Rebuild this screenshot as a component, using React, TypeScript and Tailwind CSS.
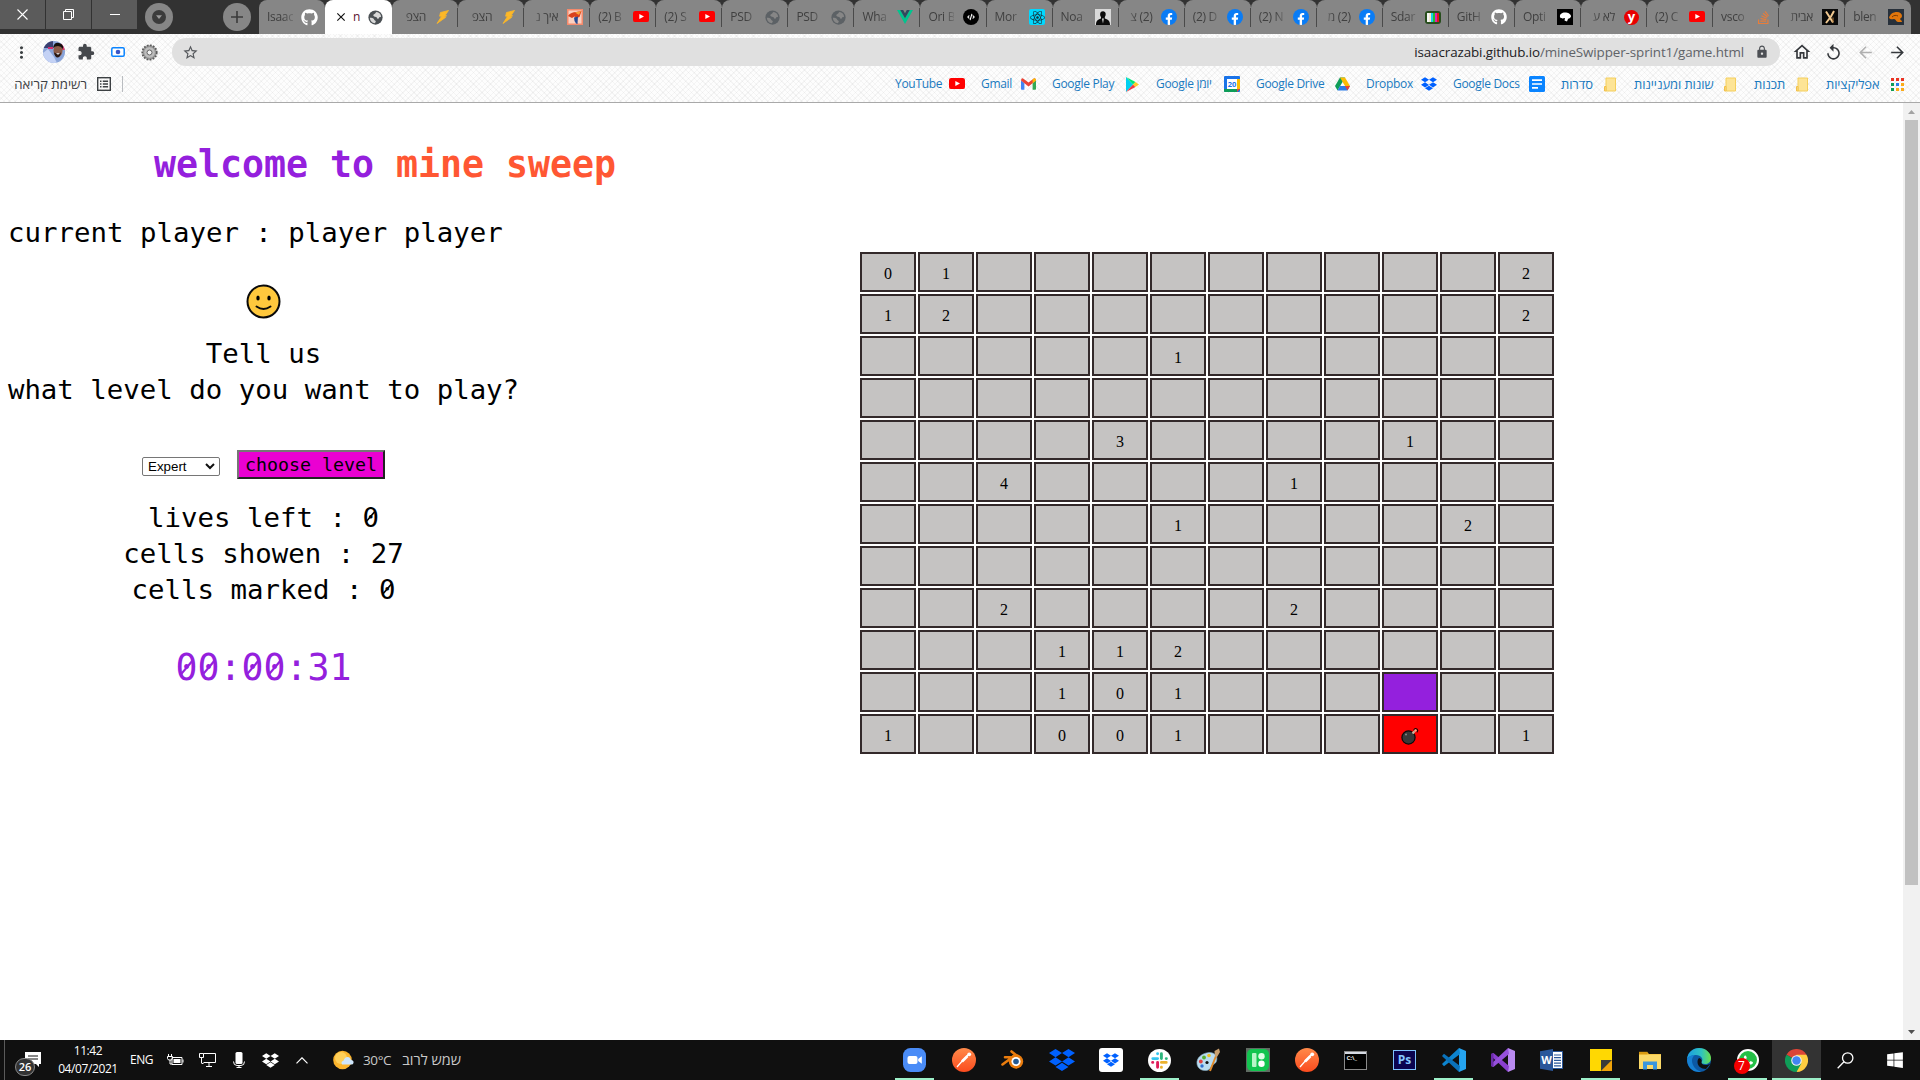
import React from "react";
import { FaGithub, FaReact, FaFacebookF, FaStackOverflow, FaDropbox, FaWindows, FaWhatsapp, FaCode } from "react-icons/fa";
import { MdExtension, MdStarBorder, MdLock, MdArrowForward, MdArrowBack, MdReplay, MdOutlineHome, MdMoreVert, MdClose } from "react-icons/md";

const Yt = ({ w = 16 }: { w?: number }) => (
  <svg width={w} height={w * 0.7} viewBox="0 0 16 11"><rect width="16" height="11" rx="2.2" fill="#f00" /><path d="M6.3 3v5L11 5.5z" fill="#fff" /></svg>
);
const Fb = () => (
  <span className="flex h-4 w-4 items-end justify-center overflow-hidden rounded-full bg-[#0a7cf5] text-white"><FaFacebookF size={12} /></span>
);
const Globe = ({ c, land }: { c: string; land: string }) => (
  <svg width="15" height="15" viewBox="0 0 16 16">
    <circle cx="8" cy="8" r="7.6" fill={c} />
    <path d="M9.5 2.2c-1.800.3-1.200 1.600-2.600 2S5 6 6.600 7c1.200.7 2.800.1 3 1.600.1 1.400 2 .8 2.400-.5.2-.8 1.300-.6 1.900-.4.2-2.700-1.600-5-4.400-5.500z" fill={land} />
    <path d="M2 8.300c1.500 0 4 .3 4.500 1.800.4 1.200 2 .9 1.800 2.200-.1.900-.8 1-.8 1.900C4.300 13.900 2 11.400 2 8.300z" fill={land} />
  </svg>
);
const Vue = () => (
  <svg width="16" height="14" viewBox="0 0 16 14"><path d="M0 0h3.200L8 8.300 12.800 0H16L8 14z" fill="#00c58e" /><path d="M3.200 0h3L8 3.200 9.800 0h3L8 8.300z" fill="#2f495e" /></svg>
);
const Bolt = () => (
  <svg width="14" height="14" viewBox="0 0 14 14"><path d="M12.500.5 4.500 2.500 3.600 6.200l2 .1L1 13.500l8.700-6.200-2.100-.3 3-1.200-1.400-.5z" fill="#fdb827" stroke="#fdb827" strokeWidth=".8" /></svg>
);
const Fox = () => (
  <svg width="16" height="16" viewBox="0 0 16 16"><rect width="16" height="16" fill="#f58a6c" /><rect x="1.500" y="1.500" width="13" height="13" fill="#fbd0c0" /><path d="M1 7c2-3 5-4 8-4l5.500-1-2 6-3 1-2-1.500L5 9z" fill="#d9421c" /><path d="M8 3.500l6-1.500-2 4z" fill="#f9a13a" /><path d="M7 8.500l4-1-.5 7.500-1.500-.5L7.500 12z" fill="#274a92" /></svg>
);
const Suit = () => (
  <svg width="16" height="16" viewBox="0 0 16 16"><rect width="16" height="16" fill="#d9d9d9" /><path d="M1 16c0-4 1.500-5.500 5-6.500V8C5.200 7 5 6 5.200 4.500 5.500 3 6.500 2.200 8 2.200s2.600 1 2.700 2.500C10.800 6 10.500 7 9.800 8v1.500C13.500 10.500 15 12 15 16z" fill="#0b0b0b" /><path d="M7 9.500l1 5 .8-5z" fill="#eee" /></svg>
);
const Tv = () => (
  <svg width="16" height="16" viewBox="0 0 16 16"><rect y="2" width="16" height="13" rx="3" fill="#274d1c" /><rect x="2" y="4" width="2" height="9" fill="#f5f5f5" /><rect x="4" y="4" width="2" height="9" fill="#f0e8d0" /><rect x="6" y="4" width="2" height="9" fill="#18d0e8" /><rect x="8" y="4" width="2" height="9" fill="#20c030" /><rect x="10" y="4" width="2" height="9" fill="#e020b0" /><rect x="12" y="4" width="2" height="9" fill="#e01818" /></svg>
);
const Blob = () => (
  <svg width="16" height="16" viewBox="0 0 16 16"><rect width="16" height="16" fill="#000" /><path d="M3 8c-.5-3 2-4.500 5-4.500 3 0 6 1.500 6 4-.6 2-2 1.500-3 2.500l-1 2.500-2.500-1 .5-2.500C6 9.500 4 10 3 8z" fill="#fff" /></svg>
);
const XIcon = () => (
  <svg width="16" height="16" viewBox="0 0 16 16"><rect width="16" height="16" fill="#0a0a0a" /><path d="M4 2.500l7 11M12 2l-3 5.500L4 14" stroke="#f0c890" strokeWidth="2" fill="none" /><path d="M11 8.500v5" stroke="#b07838" /></svg>
);
const Fish = () => (
  <svg width="16" height="16" viewBox="0 0 16 16"><rect width="16" height="16" fill="#27303a" /><path d="M1 9c1-4 4-6 8-6 3 0 5 2 5 4s-2 2-2 3 2 1 2 3h-4c-2 0-2-3-4-3s-3 1-5-1z" fill="#e0760c" /><path d="M4 8c2-2 4-2 6-1" stroke="#7a3a05" fill="none" /></svg>
);

type Tab = { t: string; icon: React.ReactNode; rtl?: boolean };
const tabs: Tab[] = [
  { t: "הצפ", icon: <Bolt />, rtl: true },
  { t: "הצפ", icon: <Bolt />, rtl: true },
  { t: "איך נ", icon: <Fox />, rtl: true },
  { t: "(2) B", icon: <Yt /> },
  { t: "(2) S", icon: <Yt /> },
  { t: "PSD", icon: <Globe c="#5c6165" land="#868686" /> },
  { t: "PSD", icon: <Globe c="#5c6165" land="#868686" /> },
  { t: "Wha", icon: <Vue /> },
  { t: "Ori B", icon: <span className="flex h-4 w-4 items-center justify-center rounded-full bg-black text-white"><FaCode size={8} /></span> },
  { t: "Mor", icon: <span className="flex h-4 w-4 items-center justify-center rounded-[2px] bg-[#00d8ff] text-[#15303a]"><FaReact size={15} /></span> },
  { t: "Noa", icon: <Suit /> },
  { t: "(2) צ", icon: <Fb />, rtl: true },
  { t: "(2) D", icon: <Fb /> },
  { t: "(2) N", icon: <Fb /> },
  { t: "(2) מ", icon: <Fb />, rtl: true },
  { t: "Sdar", icon: <Tv /> },
  { t: "GitH", icon: <FaGithub size={16} color="#fff" /> },
  { t: "Opti", icon: <Blob /> },
  { t: "לא ע", icon: <span className="flex h-[15px] w-[15px] items-center justify-center rounded-full bg-[#e80000] pb-[2px] text-[13px] font-bold leading-none text-white">y</span>, rtl: true },
  { t: "(2) C", icon: <Yt /> },
  { t: "vsco", icon: <FaStackOverflow size={15} color="#e87d3a" /> },
  { t: "אבית", icon: <XIcon />, rtl: true },
  { t: "blen", icon: <Fish /> },
];

function TabItem({ t, icon, rtl, last }: Tab & { last?: boolean }) {
  return (
    <div className="relative flex h-[34px] min-w-0 flex-1 items-center rounded-t-[8px] bg-[#868686] pl-2">
      <div
        dir={rtl ? "rtl" : "ltr"}
        className={
          rtl
            ? "w-[26px] whitespace-nowrap text-[12px] leading-[18px] tracking-[-0.3px] text-[#404040] [mask-image:linear-gradient(to_left,#000_60%,#0004)]"
            : "w-[26px] whitespace-nowrap text-[12px] leading-[18px] tracking-[-0.3px] text-[#404040] [mask-image:linear-gradient(to_right,#000_60%,#0004)]"
        }
      >
        {t}
      </div>
      <div className="ml-2 flex w-[17px] justify-center">{icon}</div>
      {!last && <div className="absolute right-0 top-2 h-[19px] w-px bg-[#4a4a4a]" />}
    </div>
  );
}

const Folder = () => (
  <svg width="14" height="15" viewBox="0 0 14 15"><path d="M3 1h9.500v13H3z" fill="#fde496" stroke="#f5cf5c" /><path d="M1.500 9.500H3V14H1.500z" fill="#fde496" stroke="#f2c14a" /></svg>
);
const GmailIcon = () => (
  <svg width="15" height="12" viewBox="0 0 15 12"><path d="M0 2.500V11q0 .8.8.8h2.600V5z" fill="#4285f4" /><path d="M15 2.500V11q0 .8-.8.8h-2.600V5z" fill="#34a853" /><path d="M0 2.500Q0 .2 1.800.2L7.500 4.600 13.200.2Q15 .2 15 2.500L7.500 8.400z" fill="#ea4335" /><path d="M11.600 1.400 13.200.2Q15 .2 15 2.500l-3.400 2.800z" fill="#fbbc04" /></svg>
);
const PlayIcon = () => (
  <svg width="14" height="15" viewBox="0 0 14 15"><path d="M1 0v15l7-7.500z" fill="#00d0f0" /><path d="M1 0l9.500 5L8 7.500z" fill="#00e676" /><path d="M1 15l9.500-5L8 7.500z" fill="#f03845" /><path d="M10.500 5 14 7.500 10.500 10 8 7.500z" fill="#ffca28" /></svg>
);
const CalIcon = () => (
  <svg width="16" height="16" viewBox="0 0 16 16"><rect width="16" height="16" rx="1" fill="#1a73e8" /><path d="M13 3h3v10h-3z" fill="#fbbc04" /><path d="M0 13h13v3H1q-1 0-1-1z" fill="#0f9d58" /><path d="M13 13h3l-3 3z" fill="#ea4335" /><rect x="3" y="3" width="10" height="10" fill="#fff" /><text x="8" y="10.800" fontSize="7.500" fontWeight="bold" textAnchor="middle" fill="#1a73e8">20</text></svg>
);
const DriveIcon = () => (
  <svg width="15" height="14" viewBox="0 0 15 14"><path d="M5 .5h5L7.500 5 2.500 13.500 0 9z" fill="#0f9d58" /><path d="M5 .5h5L15 9h-5z" fill="#fbbc04" /><path d="M5 9h10l-2.500 4.500h-10z" fill="#2b7de9" /><path d="M12.500 13.500 10 9h5z" fill="#ea4335" /></svg>
);
const DocsIcon = () => (
  <svg width="16" height="16" viewBox="0 0 16 16"><rect width="16" height="16" rx="1.500" fill="#0a84ff" /><path d="M3 4.200h10M3 8h10M3 11.800h6" stroke="#fff" strokeWidth="1.700" /></svg>
);
const AppsIcon = () => {
  const c = ["#ea3323", "#ea3323", "#ea3323", "#0f9d58", "#2b7de9", "#fbab18", "#0f9d58", "#fbab18", "#fbab18"];
  return (
    <div className="grid grid-cols-3 gap-[2px]">
      {c.map((x, i) => <div key={i} className="h-[3px] w-[3px]" style={{ background: x }} />)}
    </div>
  );
};

const bookmarks: { t: string; w: number; icon: React.ReactNode }[] = [
  { t: "YouTube", w: 70, icon: <Yt /> },
  { t: "Gmail", w: 55, icon: <GmailIcon /> },
  { t: "Google Play", w: 88, icon: <PlayIcon /> },
  { t: "Google יומן", w: 84, icon: <CalIcon /> },
  { t: "Google Drive", w: 94, icon: <DriveIcon /> },
  { t: "Dropbox", w: 71, icon: <FaDropbox size={16} color="#0061ff" /> },
  { t: "Google Docs", w: 92, icon: <DocsIcon /> },
  { t: "סדרות", w: 57, icon: <Folder /> },
  { t: "שונות ומעניינות", w: 104, icon: <Folder /> },
  { t: "תכנות", w: 56, icon: <Folder /> },
  { t: "אפליקציות", w: 79, icon: <AppsIcon /> },
];

const rows = [
  "01.........2",
  "12.........2",
  ".....1......",
  "............",
  "....3....1..",
  "..4....1....",
  ".....1....2.",
  "............",
  "..2....2....",
  "...112......",
  "...101...P..",
  "1..001...B.1",
];

const Bomb = () => (
  <svg width="18" height="18" viewBox="0 0 18 18"><circle cx="7.500" cy="10.500" r="6.600" fill="#383838" stroke="#0a0a0a" strokeWidth="1.200" /><path d="M11.500 6.500l2-2.200" stroke="#c9b8a0" strokeWidth="2.200" /><path d="M12.700 3.500q1-2.500 3-1.500 2 1.500 0 3.300" stroke="#140000" strokeWidth="1.200" fill="none" /><circle cx="14.500" cy="3.500" r="1.200" fill="#ffb090" /><circle cx="5" cy="7.500" r="1" fill="#8a8a8a" /></svg>
);

/* Zero with a diagonal stroke through the counter */
const Zero = () => (
  <span className="relative inline-block leading-none">
    0
    <svg className="absolute inset-0 h-full w-full" viewBox="0 0 60 100" preserveAspectRatio="none"><path d="M14 66L46 28" stroke="currentColor" strokeWidth="6" /></svg>
  </span>
);

const Postman = () => (
  <svg width="24" height="24" viewBox="0 0 24 24"><defs><linearGradient id="pm" x2="0" y2="1"><stop stopColor="#ff8a4a" /><stop offset="1" stopColor="#fb4b1e" /></linearGradient></defs><circle cx="12" cy="12" r="12" fill="url(#pm)" /><path d="M5 19l6.500-7.500M11 12.500l5-5.500" stroke="#fff" strokeWidth="1.200" /><path d="M10 13.500l5.500-5.500" stroke="#fff" strokeWidth="2.600" /><circle cx="17.200" cy="6.300" r="1.900" fill="#fff" /></svg>
);
const taskIcons: { icon: React.ReactNode; u?: boolean; active?: boolean }[] = [
  { u: true, icon: <svg width="23" height="24" viewBox="0 0 23 24"><rect width="23" height="24" rx="7.500" fill="#4a8cf7" /><rect x="4.500" y="8" width="10" height="8" rx="2" fill="#fff" /><path d="M15.200 11l3.600-2.700v7.400L15.200 13z" fill="#fff" /></svg> },
  { icon: <Postman /> },
  { icon: <svg width="24" height="20" viewBox="0 0 24 20"><path d="M1.500 14.500 14 5.200M4 7.300h10M10.500 1.500l9 7" stroke="#ea7c0d" strokeWidth="2.600" strokeLinecap="round" /><circle cx="15" cy="11.500" r="7.200" fill="#ea7c0d" /><circle cx="15" cy="11.500" r="4.600" fill="#fff" /><circle cx="15" cy="11.500" r="2.800" fill="#235a94" /></svg> },
  { icon: <FaDropbox size={26} color="#0061ff" /> },
  { icon: <span className="flex h-6 w-6 items-center justify-center rounded-[3px] bg-white"><FaDropbox size={16} color="#0061ff" /></span> },
  { u: true, icon: <svg width="23" height="23" viewBox="0 0 24 24"><circle cx="12" cy="12" r="12" fill="#fff" /><g strokeWidth="3" strokeLinecap="round"><path d="M10 4.800V5M5 10h5" stroke="#36c5f0" /><path d="M14 5v5M19 10h.2" stroke="#2eb67d" /><path d="M14 14h5M14 19v.2" stroke="#ecb22e" /><path d="M10 14v5M5 14h-.2" stroke="#e01e5a" /></g></svg> },
  { icon: <svg width="25" height="24" viewBox="0 0 25 24"><path d="M1 16C0 10 6 5 13 4.500c6-.3 9 4 7.500 8.500-1 3.500-4 3-5 5s-2 5-7 4.500S1.500 19 1 16z" fill="#b9dcf0" stroke="#7fa8c0" strokeWidth=".6" /><circle cx="8" cy="9.500" r="1.900" fill="#58b030" /><circle cx="13" cy="7.500" r="1.800" fill="#f0c020" /><circle cx="4.800" cy="13.500" r="1.900" fill="#e04040" /><circle cx="6" cy="18" r="1.700" fill="#3070d0" /><circle cx="11" cy="14.500" r="1.600" fill="#101010" /><path d="M14 23 20 8" stroke="#e08a2a" strokeWidth="2" /><path d="M19 8.500 18.500 3 23 .5 24 4l-3 5z" fill="#c9a070" /></svg> },
  { icon: <svg width="24" height="24" viewBox="0 0 24 24"><rect width="24" height="24" fill="#5f6b62" /><rect x="1" y="1" width="22" height="22" rx="5" fill="#12c44f" /><rect x="6" y="5" width="4.500" height="14" rx="1" fill="#b8f5c8" /><circle cx="15.500" cy="8.200" r="3.200" fill="#dfffe6" /><circle cx="15.500" cy="15.800" r="3.200" fill="#fff" /></svg> },
  { icon: <Postman /> },
  { icon: <svg width="23" height="19" viewBox="0 0 23 19"><rect x=".5" y=".5" width="22" height="18" fill="#000" stroke="#8a8a8a" /><rect x="1" y="1" width="21" height="2" fill="#d5d9e2" /><text x="2.500" y="9" fontSize="6" fontWeight="bold" fill="#eee">C:\_</text></svg> },
  { icon: <span className="flex h-5 w-[23px] items-center justify-center border border-[#7fc4ff] bg-[#0b0550] text-[12px] font-bold leading-none text-[#86c8ff]">Ps</span> },
  { u: true, icon: <svg width="24" height="24" viewBox="0 0 24 24"><path d="M17 0l7 3v18l-7 3z" fill="#25a4f0" /><path d="M17 0 1.500 14.500 0 16l2 2.200L18 6z" fill="#0d84cf" /><path d="M17 24 1.500 9.500 0 8l2-2.200L18 18z" fill="#0a72bb" /></svg> },
  { icon: <svg width="24" height="24" viewBox="0 0 24 24"><path d="M17 0l7 3v18l-7 3z" fill="#b98af0" /><path d="M0 6l2.500-1L18 18l-1 6L0 8z" fill="#8a3fd0" /><path d="M0 18l2.500 1L18 6l-1-6L0 16z" fill="#9650dc" /><path d="M0 6l2.500-1v14L0 18z" fill="#6a2ca8" /></svg> },
  { icon: <svg width="23" height="22" viewBox="0 0 23 22"><path d="M12 2.500h10.500v17H12z" fill="#fff" stroke="#2b579a" /><path d="M14 6h7M14 8.700h7M14 11.400h7M14 14.100h7M14 16.800h7" stroke="#2b579a" strokeWidth="1.200" /><path d="M0 2.300 13 0v22L0 19.700z" fill="#2b579a" /><text x="6.500" y="15" fontSize="11" fontWeight="bold" textAnchor="middle" fill="#fff">W</text></svg> },
  { u: true, icon: <svg width="22" height="22" viewBox="0 0 22 22"><path d="M0 0h22v11L11 22H0z" fill="#ffd802" /><path d="M11 11h11L11 22z" fill="#3a3a3a" /><path d="M22 11v11H11z" fill="#f0a30a" /></svg> },
  { icon: <svg width="22" height="19" viewBox="0 0 22 19"><path d="M0 1h8l2 2h12v15H0z" fill="#f0b429" /><rect y="3.500" width="22" height="14.500" fill="#fbd968" /><path d="M0 .8h8.500v2.500H0z" fill="#d99a10" /><path d="M4 18.500V10.500h14v8h-4V14H8v4.500z" fill="#3a96dd" /></svg> },
  { icon: <svg width="24" height="24" viewBox="0 0 24 24"><defs><linearGradient id="eg"><stop stopColor="#1b9de2" /><stop offset=".6" stopColor="#2fc3c0" /><stop offset="1" stopColor="#6be04a" /></linearGradient></defs><circle cx="12" cy="12" r="12" fill="#0c59a4" /><path d="M0 11C1 4 6 0 12 0c7 0 12 5 12 10 0 4-3 6-6 6-2.500 0-4-1-3.500-2C17 11 14 7 9 7c-4 0-8 2-9 4z" fill="url(#eg)" /><path d="M0 11c1-2 4-4 8-4-3 2-4 6-2 10 1.500 3.500 5 6 8 6.700C6 25 0 19 0 11z" fill="#1680d2" /><path d="M14.500 14c-.5 1 1 3 4 3 2 0 4-.6 5-1.500L19 21c-5 0-8.500-3-8.500-7 0-2 .8-3.500 1.700-4 2 .5 3 2.500 2.300 4z" fill="#101010" /></svg> },
  { u: true, icon: <span className="relative flex h-[22px] w-[22px] items-center justify-center rounded-full border-2 border-white bg-[#25c047] text-white"><svg width="14" height="14" viewBox="0 0 14 14"><path d="M4 2.500q-2 1.500-.5 4.500Q5.500 10.500 9 11.500q2 .3 3-1.500l-.3-1L9.500 8l-1 1.200Q6 8.200 5 6l.8-1L5 2.700z" fill="#fff" /></svg><span className="absolute -left-[5px] top-[7px] flex h-4 w-4 items-center justify-center rounded-full bg-[#f40000] text-[12px] leading-none">7</span></span> },
  { u: true, active: true, icon: <svg width="23" height="23" viewBox="0 0 24 24"><path d="M12 12 1.600 6A12 12 0 0 1 22.400 6z" fill="#db4437" /><path d="M12 12V6H22.400A12 12 0 0 1 12 24z" fill="#ffcd40" /><path d="M12 12L1.600 6A12 12 0 0 0 12 24l5-9z" fill="#0f9d58" /><circle cx="12" cy="12" r="5.500" fill="#f1f1f1" /><circle cx="12" cy="12" r="4.400" fill="#4285f4" /></svg> },
  { icon: <svg width="17" height="17" viewBox="0 0 17 17" fill="none" stroke="#fff" strokeWidth="1.300"><circle cx="10.700" cy="6" r="5.200" /><path d="M7 9.700.7 16.300" /></svg> },
  { icon: <FaWindows size={18} color="#fff" /> },
];

export default function App() {
  return (
    <div className="flex h-[1080px] w-[1920px] flex-col overflow-hidden bg-white font-['Open_Sans','Noto_Sans','Liberation_Sans',sans-serif] text-black">
      {/* Tab strip */}
      <div className="flex h-[34px] shrink-0 bg-[#323232]">
        <div className="flex h-[29px] w-[137px] gap-px text-white">
          <div className="flex w-[45px] items-center justify-center bg-[#5b5b5b]"><svg width="11" height="11" viewBox="0 0 11 11" stroke="#fff" strokeWidth="1.100"><path d="M.5.5l10 10M10.500.5l-10 10" /></svg></div>
          <div className="flex w-[45px] items-center justify-center bg-[#5b5b5b]"><svg width="11" height="11" viewBox="0 0 11 11" stroke="#fff" fill="none"><path d="M.5 2.500h8v8h-8zM2.500 2.500v-2h8v8h-2" /></svg></div>
          <div className="flex w-[45px] items-center justify-center bg-[#5b5b5b]"><div className="h-px w-[10px] bg-white" /></div>
        </div>
        <div className="ml-2 mt-[3px] flex h-7 w-7 items-center justify-center rounded-full bg-[#868686]">
          <svg width="14" height="14" viewBox="0 0 14 14"><circle cx="7" cy="7" r="7" fill="#3b3b3b" /><path d="M4 5.300h6L7 9z" fill="#9a9a9a" /></svg>
        </div>
        <div className="ml-[50px] mt-[3px] flex h-7 w-7 items-center justify-center rounded-full bg-[#868686]">
          <svg width="12" height="12" viewBox="0 0 12 12" stroke="#3b3b3b" strokeWidth="1.600"><path d="M6 0v12M0 6h12" /></svg>
        </div>
        <div className="ml-2 flex w-[1652px]">
          <TabItem t="Isaac" icon={<FaGithub size={17} color="#fff" />} last />
          <div className="flex h-[34px] min-w-0 flex-1 items-center rounded-t-[8px] bg-white pl-[9px]">
            <MdClose size={14} color="#111" />
            <div className="ml-[5px] w-[8px] text-[12px] leading-[18px] text-[#5a1030]">n</div>
            <div className="ml-[7px]"><Globe c="#4b5054" land="#d8d8d8" /></div>
          </div>
          {tabs.map((t, i) => <TabItem key={i} {...t} last={i === tabs.length - 1} />)}
        </div>
      </div>

      {/* Toolbar and bookmarks */}
      <div className="flex h-[69px] shrink-0 flex-col border-b border-[#a9a9a9] bg-[#fdfdfd] bg-[repeating-linear-gradient(45deg,#0000_0_3px,#00000009_3px_4px),repeating-linear-gradient(-45deg,#0000_0_3px,#00000009_3px_4px)]">
        <div className="flex h-9 items-center">
          <div className="ml-[11px] flex w-5 justify-center"><MdMoreVert size={19} color="#3c4043" /></div>
          <svg className="ml-3" width="22" height="22" viewBox="0 0 22 22"><defs><clipPath id="av"><circle cx="11" cy="11" r="11" /></clipPath></defs><g clipPath="url(#av)"><rect width="22" height="22" fill="#8aa4d8" /><path d="M0 0h10v7H0z" fill="#3a3f70" /><path d="M5 6h5v2H5z" fill="#d03070" /><path d="M18 0h4v9h-4z" fill="#d83a68" /><path d="M0 22V12l5-4 6 8 3 6z" fill="#c4d2f5" /><ellipse cx="15" cy="9.500" rx="4.500" ry="6.500" fill="#8a5c48" /><path d="M10 7q1-6 6-5 5 1 4 6-2-3-5-3t-5 2z" fill="#14100e" /><path d="M11 11.500q4 2 7 0-1 5-3.500 5t-3.500-5z" fill="#2a1812" /><path d="M13 12.300h4l-2 1.500z" fill="#fff" /></g></svg>
          <div className="ml-3 flex w-[18px] justify-center"><MdExtension size={18} color="#45484c" /></div>
          <svg className="ml-4" width="14" height="10" viewBox="0 0 14 10"><rect x=".8" y=".8" width="12.400" height="8.400" rx="1.200" fill="#fff" stroke="#0a84ff" strokeWidth="1.500" /><circle cx="7" cy="5" r="2.300" fill="#3a56c5" /></svg>
          <svg className="ml-[16px]" width="17" height="17" viewBox="0 0 17 17"><circle cx="8.500" cy="8.500" r="7.200" fill="#a4a4a4" stroke="#5b5b5b" strokeWidth="1.800" strokeDasharray="1.800 1.300" /><circle cx="8.500" cy="8.500" r="5.800" fill="#bdbdbd" stroke="#888" strokeWidth=".8" /><circle cx="8.500" cy="8.500" r="2.500" fill="#f2f2f2" stroke="#666" /></svg>
          <div className="ml-[14px] flex h-7 w-[1608px] items-center justify-between rounded-full bg-[#e0e0e0] pl-[10px] pr-[11px]">
            <MdStarBorder size={17} color="#55585c" />
            <div className="flex items-center">
              <span className="whitespace-nowrap text-[13.400px] leading-5 tracking-[-0.100px] text-[#5f6368]"><span className="text-[#202124]">isaacrazabi.github.io</span>/mineSwipper-sprint1/game.html</span>
              <MdLock className="ml-[11px]" size={14} color="#4c4f54" />
            </div>
          </div>
          <MdOutlineHome className="ml-3" size={20} color="#35383c" />
          <MdReplay className="ml-[12px]" size={19} color="#35383c" />
          <MdArrowBack className="ml-[13px]" size={19} color="#b0b0b0" />
          <MdArrowForward className="ml-[13px]" size={19} color="#35383c" />
        </div>
        <div className="-mt-[2px] flex h-8 items-center justify-between pl-[14px] pr-[15px] text-[12px] leading-[18px]">
          <div className="flex items-center">
            <span dir="rtl" className="w-[73px] whitespace-nowrap text-[13.200px] text-[#3c4043]">רשימת קריאה</span>
            <svg className="ml-[10px]" width="14" height="14" viewBox="0 0 14 14"><rect x=".7" y=".7" width="12.600" height="12.600" fill="none" stroke="#3c4043" strokeWidth="1.400" /><path d="M3 4.200h1.500M3 7h1.500M3 9.800h1.500M5.800 4.200H11M5.800 7H11M5.800 9.800H11" stroke="#3c4043" strokeWidth="1.400" /></svg>
            <div className="ml-[11px] h-4 w-px bg-[#b9bcc0]" />
          </div>
          <div className="flex gap-4 text-[#1a7abf]">
            {bookmarks.map((b, i) => (
              <div key={i} className="flex shrink-0 items-center justify-between" style={{ width: b.w }}>
                <span
                  className={
                    i > 6
                      ? "whitespace-nowrap text-[13px] tracking-[-0.100px]"
                      : "whitespace-nowrap tracking-[-0.300px]"
                  }
                >
                  {b.t}
                </span>
                <span className="flex w-4 shrink-0 justify-center">{b.icon}</span>
              </div>
            ))}
          </div>
        </div>
      </div>

      {/* Page */}
      <div className="flex h-[937px] shrink-0">
        <div className="flex flex-1 items-start font-['DejaVu_Sans_Mono',monospace]">
          <div className="w-[860px] pl-2">
            <h1 className="ml-[146px] mt-[38px] whitespace-nowrap text-[36.540px] font-bold leading-[47px] text-[#9420dd]">welcome to <span className="text-[#ff5733]">mine sweep</span></h1>
            <div className="mt-[27px] flex w-[511px] flex-col items-center text-[27.400px] leading-9">
              <div className="self-start whitespace-pre">current player : player player</div>
              <svg className="mt-[33px]" width="35" height="35" viewBox="0 0 35 35"><circle cx="17.500" cy="17.500" r="16" fill="#ffc83d" stroke="#0a0a0a" strokeWidth="2" /><ellipse cx="12" cy="14" rx="1.700" ry="2.600" /><ellipse cx="23" cy="14" rx="1.700" ry="2.600" /><path d="M10.500 22.500q7 4.800 14 0" fill="none" stroke="#0a0a0a" strokeWidth="2" strokeLinecap="round" /></svg>
              <div className="mt-[17px]">Tell us</div>
              <div className="whitespace-nowrap">what level do you want to play?</div>
              <div className="mt-[42px] flex h-[29px] items-start">
                <div className="mt-[7px] flex h-[19px] w-[78px] items-center justify-between rounded-[2px] border border-[#767676] bg-white pl-[5px] pr-[4px] font-['Liberation_Sans',sans-serif] text-[13.333px] leading-none">
                  Expert
                  <svg width="10" height="7" viewBox="0 0 10 7" fill="none" stroke="#111" strokeWidth="2"><path d="M1 1l4 4 4-4" /></svg>
                </div>
                <div className="ml-[17px] flex h-[29px] w-[148px] items-center justify-center whitespace-nowrap border-2 border-b-[#222] border-l-[#767676] border-r-[#222] border-t-[#767676] bg-[#ea00d2] pt-px text-[18.270px] leading-none">choose level</div>
              </div>
              <div className="mt-[21px] whitespace-nowrap">lives left : <Zero /></div>
              <div className="whitespace-nowrap">cells showen : 27</div>
              <div className="whitespace-nowrap">cells marked : <Zero /></div>
              <div className="mt-[36px] text-[36.540px] leading-[47px] text-[#9420dd]"><Zero /><Zero />:<Zero /><Zero />:31</div>
            </div>
          </div>
          <div className="mt-[149px] grid grid-cols-[repeat(12,56px)] gap-[2px] font-['Liberation_Serif',serif] text-base leading-none">
            {rows.flatMap((r, y) =>
              r.split("").map((c, x) => (
                <div
                  key={`${x}-${y}`}
                  className={
                    c === "P"
                      ? "flex h-10 items-center justify-center border-2 border-[#33292a] bg-[#9420dd]"
                      : c === "B"
                        ? "flex h-10 items-center justify-center border-2 border-[#33292a] bg-[#ff0000] pt-[3px]"
                        : "flex h-10 items-center justify-center border-2 border-[#33292a] bg-[#c5c3c2] pt-[3px]"
                  }
                >
                  {c === "B" ? <Bomb /> : c === "." || c === "P" ? null : c}
                </div>
              )),
            )}
          </div>
        </div>
        <div className="flex w-[17px] flex-col items-center bg-[#f1f1f1]">
          <div className="flex h-[17px] items-center"><svg width="7" height="4" viewBox="0 0 7 4"><path d="M0 4l3.500-4L7 4z" fill="#a3a3a3" /></svg></div>
          <div className="h-[765px] w-[13px] bg-[#c1c1c1]" />
          <div className="mt-auto flex h-[17px] items-center"><svg width="7" height="4" viewBox="0 0 7 4"><path d="M0 0h7L3.500 4z" fill="#505050" /></svg></div>
        </div>
      </div>

      {/* Taskbar */}
      <div className="flex h-10 shrink-0 items-center justify-between bg-[#101010] pr-px text-[12px] text-white">
        <div className="flex h-10 items-center">
          <div className="ml-1 h-10 w-px bg-[#5a5a5a]" />
          <div className="relative ml-5 h-[15px] w-4">
            <svg className="-mt-[1px]" width="16" height="15" viewBox="0 0 16 15"><path d="M0 0h16v12h-2v3l-3-3H0z" fill="#fff" /><path d="M3 4h10M3 7h10" stroke="#101010" /></svg>
            <div className="absolute -left-[10px] top-[5px] flex h-[18px] w-[20px] items-center justify-center rounded-full border border-[#8a8a8a] bg-[#333] text-[11px] font-semibold leading-none">26</div>
          </div>
          <div className="ml-[16px] w-[62px] text-center tracking-[-0.400px]">
            <div className="leading-[18px]">11:42</div>
            <div className="whitespace-nowrap leading-[18px]">04/07/2021</div>
          </div>
          <div className="ml-[11px] w-[24px] tracking-[-0.500px]">ENG</div>
          <svg className="ml-[13px]" width="17" height="13" viewBox="0 0 17 13" fill="none" stroke="#fff"><path d="M5 3.500h10v7H5z" /><path d="M6.500 5h7v4h-7z" fill="#fff" stroke="none" /><path d="M16 5.500v3M1.500 0v2.500M4.500 0v2.500M.5 2.500h5v2l-1 1.500h-3L.5 4.500zM3 6v4h2" /></svg>
          <svg className="ml-[15px]" width="17" height="14" viewBox="0 0 17 14" fill="none" stroke="#fff"><path d="M4.500.5h12v9h-12M2.500 5v5M7 13.500h6M10 10v3.500M.5.500h4v4h-4zM2.500 10.500h2" /></svg>
          <svg className="ml-[17px]" width="12" height="16" viewBox="0 0 12 16"><rect x="2.500" width="7" height="12" rx="1.500" fill="#fff" /><path d="M.5 9.500q0 4 3.500 4h4q3.500 0 3.500-4M6 13.500V16M3.500 15.500h5" stroke="#fff" fill="none" /></svg>
          <FaDropbox className="ml-[17px]" size={17} />
          <svg className="ml-[17px]" width="12" height="7" viewBox="0 0 12 7" fill="none" stroke="#fff" strokeWidth="1.200"><path d="M.5 6.300 6 .8l5.500 5.500" /></svg>
          <svg className="ml-[25px]" width="22" height="20" viewBox="0 0 22 20"><circle cx="9.500" cy="10" r="9.300" fill="#fbb42c" /><circle cx="8" cy="8" r="6" fill="#ffd05a" /><path d="M9 14.500q-1.500-3 1.700-4 1-4 4.500-3.500 2.300.3 2.800 3 3 .3 2.500 3-.5 1.500-2 1.500H10z" fill="#cfe6fb" /></svg>
          <div className="ml-[8px] w-[30px] whitespace-nowrap text-[13.500px] tracking-[-0.400px] text-[#c9c9c9]">30°C</div>
          <div dir="rtl" className="ml-[6px] w-[62px] whitespace-nowrap text-[14.500px] text-[#c9c9c9]">שמש לרוב</div>
        </div>
        <div className="flex h-10">
          {taskIcons.map((k, i) => (
            <div key={i} className={k.active ? "relative flex w-[49px] items-center justify-center bg-[#333]" : "relative flex w-[49px] items-center justify-center"}>
              {k.icon}
              {k.u && <div className={k.active ? "absolute inset-x-0 bottom-0 h-[2px] bg-[#9df0c9]" : "absolute inset-x-[5px] bottom-0 h-[2px] bg-[#9df0c9]"} />}
            </div>
          ))}
        </div>
      </div>
    </div>
  );
}
